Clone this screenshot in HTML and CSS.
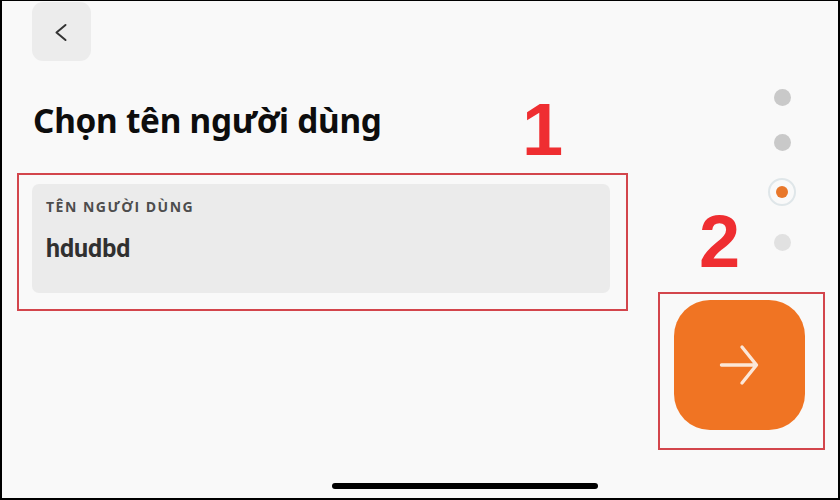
FILE: index.html
```html
<!DOCTYPE html>
<html lang="vi">
<head>
<meta charset="utf-8">
<title>Chọn tên người dùng</title>
<link rel="stylesheet" href="styles.css">
</head>
<body>
<div class="screen">
  <div class="main">
    <button class="back" type="button" aria-label="Quay lại">
      <svg width="14" height="20" viewBox="0 0 14 20"><path d="M11.5 3 L2.5 10.5 L11.5 18" fill="none" stroke="#333" stroke-width="2" stroke-linecap="round" stroke-linejoin="round"/></svg>
    </button>
    <h1 class="title">Chọn tên người dùng</h1>
    <div class="field">
      <div class="field-label">TÊN NGƯỜI DÙNG</div>
      <div class="field-value">hdudbd</div>
    </div>
  </div>
  <div class="rail">
    <div class="dots">
      <div class="dot-wrap first"><span class="dot"></span></div>
      <div class="dot-wrap"><span class="dot"></span></div>
      <div class="dot-wrap"><span class="ring"><span class="ring-dot"></span></span></div>
      <div class="dot-wrap"><span class="dot light"></span></div>
    </div>
    <button class="next" type="button" aria-label="Tiếp">
      <svg width="40" height="42" viewBox="0 0 40 42"><path d="M2.5 21 H37 M23 3 L37.5 21 L23 39" fill="none" stroke="#fce7d8" stroke-width="3.4" stroke-linecap="round" stroke-linejoin="round"/></svg>
    </button>
  </div>

  <div class="mark box1"></div>
  <div class="mark box2"></div>
  <div class="num num1">1</div>
  <div class="num num2">2</div>
  <div class="home"></div>
</div>
</body>
</html>
```
FILE: styles.css
```css
html, body {
  margin: 0;
  padding: 0;
  background: #f9f9f9;
}
.screen {
  position: relative;
  box-sizing: border-box;
  width: 840px;
  height: 500px;
  background: #f9f9f9;
  border-top: 1px solid #000;
  border-left: 2px solid #000;
  border-right: 2px solid #000;
  border-bottom: 2px solid #000;
  display: flex;
  overflow: hidden;
}
.main {
  margin-left: 30px;
  width: 578px;
  display: flex;
  flex-direction: column;
}
.back {
  margin-top: 1px;
  width: 59px;
  height: 59px;
  border: 0;
  border-radius: 11px;
  background: #ececec;
  padding: 0;
  display: flex;
  align-items: center;
  justify-content: center;
}
.back svg { display: block; margin-left: -2px; }
.title {
  margin: 39px 0 0 1px;
  font-family: "Noto Sans", "Open Sans", sans-serif;
  font-weight: 700;
  font-size: 33.3px;
  line-height: 40px;
  color: #0d0d0d;
  letter-spacing: -0.25px;
}
.field {
  margin-top: 44px;
  height: 109px;
  box-sizing: border-box;
  background: #ebebeb;
  border-radius: 7px;
  padding: 14px 0 0 14px;
}
.field-label {
  font-family: "Open Sans", "Noto Sans", sans-serif;
  font-weight: 700;
  font-size: 14px;
  line-height: 17px;
  letter-spacing: 1.5px;
  color: #4d4d4d;
}
.field-value {
  margin-top: 19px;
  font-family: Roboto, "Liberation Sans", sans-serif;
  font-weight: 700;
  font-size: 25px;
  line-height: 30px;
  color: #303030;
}
.rail {
  margin-left: 64px;
  width: 131px;
  display: flex;
  flex-direction: column;
  align-items: flex-end;
}
.dots {
  margin-top: 82px;
  margin-right: 9px;
  width: 28px;
  display: flex;
  flex-direction: column;
  gap: 22px;
}
.dot-wrap {
  width: 28px;
  height: 28px;
  display: flex;
  align-items: center;
  justify-content: center;
}
.dot-wrap.first { margin-bottom: -5px; }
.dot {
  width: 17px;
  height: 17px;
  border-radius: 50%;
  background: #c9c9c9;
}
.dot.light { background: #e1e1e1; }
.ring {
  box-sizing: border-box;
  width: 28px;
  height: 28px;
  border-radius: 50%;
  border: 2px solid #dfe6e9;
  background: #f9f9f9;
  display: flex;
  align-items: center;
  justify-content: center;
}
.ring-dot {
  width: 12px;
  height: 12px;
  border-radius: 50%;
  background: #e8772a;
}
.next {
  margin-top: 44px;
  width: 131px;
  height: 130px;
  border: 0;
  padding: 0;
  border-radius: 36px;
  background: #f07423;
  display: flex;
  align-items: center;
  justify-content: center;
}
.next svg { display: block; margin-left: -1px; }

/* annotation overlays */
.mark {
  position: absolute;
  box-sizing: border-box;
  border: 2px solid #d3454c;
}
.box1 { left: 15px; top: 172px; width: 611px; height: 138px; }
.box2 { left: 656px; top: 291px; width: 167px; height: 158px; }
.num {
  position: absolute;
  font-family: "Liberation Sans", Arial, sans-serif;
  font-weight: 700;
  font-size: 74px;
  line-height: 74px;
  color: #ef2e31;
}
.num1 { left: 520px; top: 92px; }
.num2 { left: 697px; top: 204px; }
.home {
  position: absolute;
  left: 330px;
  top: 482px;
  width: 266px;
  height: 6px;
  border-radius: 3px;
  background: #000;
}
```
